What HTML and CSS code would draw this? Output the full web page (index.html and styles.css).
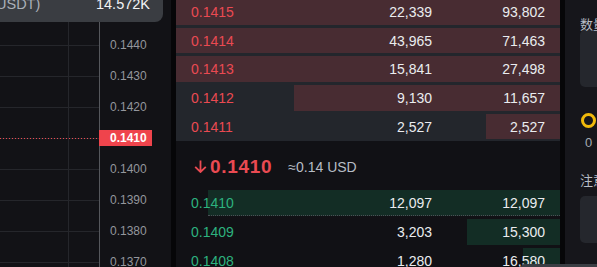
FILE: index.html
```html
<!DOCTYPE html>
<html lang="zh">
<head>
    <meta charset="UTF-8">
    <meta name="viewport" content="width=device-width, initial-scale=1.0">
    <title>订单簿</title>
    <link rel="stylesheet" href="styles.css">
</head>
<body>
    <div class="screen">
        <div class="chart">
            <div class="plot">
                <div class="last-line"></div>
            </div>
            <div class="axis">
                <div class="tick"><span>0.1440</span></div>
                <div class="tick"><span>0.1430</span></div>
                <div class="tick"><span>0.1420</span></div>
                <div class="tick"><span class="tag">0.1410</span></div>
                <div class="tick"><span>0.1400</span></div>
                <div class="tick"><span>0.1390</span></div>
                <div class="tick"><span>0.1380</span></div>
                <div class="tick"><span>0.1370</span></div>
            </div>
            <div class="tip">
                <span class="tip-label">USDT)</span>
                <span class="tip-value">14.572K</span>
            </div>
        </div>

        <div class="book">
            <div class="asks">
                <div class="row ask">
                    <div class="bar" style="width: 100%"></div>
                    <span class="price">0.1415</span><span class="num">22,339</span><span class="num">93,802</span>
                </div>
                <div class="row ask">
                    <div class="bar" style="width: 100%"></div>
                    <span class="price">0.1414</span><span class="num">43,965</span><span class="num">71,463</span>
                </div>
                <div class="row ask">
                    <div class="bar" style="width: 100%"></div>
                    <span class="price">0.1413</span><span class="num">15,841</span><span class="num">27,498</span>
                </div>
                <div class="row ask">
                    <div class="bar" style="width: 69.3%"></div>
                    <span class="price">0.1412</span><span class="num">9,130</span><span class="num">11,657</span>
                </div>
                <div class="row ask">
                    <div class="bar" style="width: 19.3%"></div>
                    <span class="price">0.1411</span><span class="num">2,527</span><span class="num">2,527</span>
                </div>
            </div>

            <div class="mid">
                <svg class="arrow" width="13" height="13" viewBox="0 0 13 13">
                    <path d="M6.5 0.5V12M1.2 6.8L6.5 12L11.8 6.8" fill="none" stroke="#ea4a52" stroke-width="1.8"/>
                </svg>
                <span class="last">0.1410</span>
                <span class="usd">≈0.14 USD</span>
            </div>

            <div class="bids">
                <div class="row bid">
                    <div class="bar dotted" style="width: 91.7%"></div>
                    <span class="price">0.1410</span><span class="num">12,097</span><span class="num">12,097</span>
                </div>
                <div class="row bid">
                    <div class="bar" style="width: 24.2%"></div>
                    <span class="price">0.1409</span><span class="num">3,203</span><span class="num">15,300</span>
                </div>
                <div class="row bid">
                    <div class="bar" style="width: 9.6%"></div>
                    <span class="price">0.1408</span><span class="num">1,280</span><span class="num">16,580</span>
                </div>
            </div>
        </div>

        <div class="panel">
            <div class="label">数量</div>
            <div class="input"></div>
            <div class="ring"></div>
            <div class="zero">0</div>
            <div class="label note">注意</div>
            <div class="input small"></div>
        </div>

        <div class="popup"></div>
    </div>
</body>
</html>
```

FILE: styles.css
```css
body {
    margin: 0;
    background: #060608;
    font-family: "Liberation Sans", Arial, sans-serif;
}

.screen {
    position: relative;
    display: flex;
    gap: 5px;
    width: 597px;
    height: 267px;
    overflow: hidden;
}

/* chart */

.chart {
    position: relative;
    display: flex;
    width: 171px;
    flex-shrink: 0;
    background: #121216;
    overflow: hidden;
}

.plot {
    position: relative;
    width: 99px;
    flex-shrink: 0;
    background:
        linear-gradient(to right, transparent 68px, #25262b 68px, #25262b 69px, transparent 69px),
        linear-gradient(to bottom, transparent 30px, #25262b 30px) 0 15px / 100% 31px;
}

.last-line {
    position: absolute;
    left: 0;
    right: 0;
    top: 138px;
    height: 1px;
    background: repeating-linear-gradient(to right, #ea4a52 0, #ea4a52 1px, transparent 1px, transparent 3px);
}

.axis {
    flex: 1;
    border-left: 1px solid #55575c;
    padding-top: 29px;
}

.tick {
    display: flex;
    align-items: center;
    height: 31px;
}

.tick span {
    padding-left: 10px;
    font-size: 12px;
    color: #94969d;
}

.tick .tag {
    margin-left: -1px;
    padding: 0 5px 0 11px;
    line-height: 16px;
    background: #ef444c;
    color: #fff;
    font-weight: bold;
}

.tip {
    position: absolute;
    top: -3px;
    left: 0;
    display: flex;
    justify-content: space-between;
    width: 163px;
    height: 25px;
    padding-right: 13px;
    box-sizing: border-box;
    background: #3a3d42;
    border-bottom-right-radius: 8px;
    line-height: 14px;
    font-size: 14.5px;
}

.tip-label {
    margin-left: -4px;
    color: #aab0b8;
}

.tip-value {
    color: #f2f3f5;
}

/* order book */

.book {
    width: 384px;
    flex-shrink: 0;
    background: #111115;
    overflow: hidden;
}

.asks {
    margin-top: -2.5px;
    background: #23262c;
}

.row {
    position: relative;
    display: grid;
    grid-template-columns: 128px 113px 113px;
    align-items: center;
    height: 28.7px;
    padding: 0 15px;
    font-size: 14px;
}

.row span {
    position: relative;
}

.bar {
    position: absolute;
    right: 0;
    top: 1.5px;
    bottom: 1.5px;
}

.ask .bar {
    background: #482c32;
}

.bid .bar {
    background: #132d25;
}

.bar.dotted {
    border-bottom: 1px dotted #4c5056;
}

.ask .price {
    color: #ea4a52;
}

.bid .price {
    color: #2db27f;
}

.num {
    text-align: right;
    color: #eaecef;
}

.mid {
    display: flex;
    align-items: center;
    height: 48px;
    padding: 4px 0 0 18px;
    box-sizing: border-box;
}

.arrow {
    margin-right: 3px;
}

.last {
    font-size: 19px;
    font-weight: bold;
    letter-spacing: 0.7px;
    color: #ea4a52;
}

.usd {
    margin-left: 16px;
    font-size: 14px;
    color: #b7bdc6;
}

/* right panel */

.panel {
    flex: 1;
    padding: 17px 0 0 15px;
    background: #16161b;
    overflow: hidden;
}

.label {
    height: 13px;
    line-height: 13px;
    font-size: 13px;
    font-family: "Noto Sans CJK SC", sans-serif;
    color: #b7bdc6;
    white-space: nowrap;
}

.input {
    width: 120px;
    height: 57px;
    background: #25272d;
    border-radius: 5px;
}

.input.small {
    height: 47px;
    margin-top: 10px;
}

.ring {
    width: 15px;
    height: 15px;
    margin: 26px 0 0 1px;
    box-sizing: border-box;
    border: 3px solid #f0b90b;
    border-radius: 50%;
}

.zero {
    margin: 8px 0 0 5px;
    line-height: 14px;
    font-size: 13px;
    color: #a4aab2;
}

.note {
    margin-top: 23px;
}

.popup {
    position: absolute;
    left: 520px;
    top: 264px;
    width: 100px;
    height: 20px;
    background: #3b3e44;
    border-top-left-radius: 5px;
}
```
